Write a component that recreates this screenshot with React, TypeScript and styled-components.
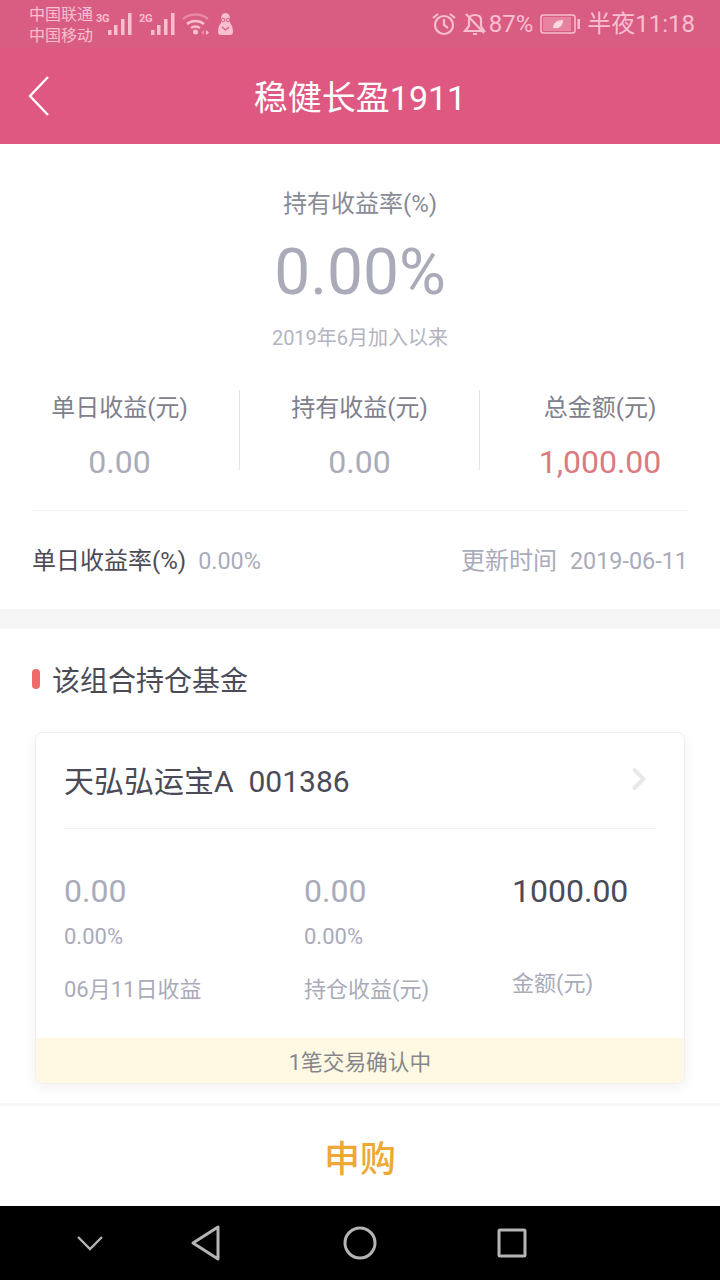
import React from 'react';
import styled, { createGlobalStyle } from 'styled-components';

const GlobalStyle = createGlobalStyle`
  html, body {
    margin: 0;
    padding: 0;
    background: #fff;
    font-family: Roboto, "Noto Sans CJK SC", sans-serif;
  }
`;

const Page = styled.div`
  width: 720px;
  height: 1280px;
  display: flex;
  flex-direction: column;
  overflow: hidden;
`;

const Header = styled.header`
  height: 144px;
  flex: none;
  background: #de5881;
  display: flex;
  flex-direction: column;
`;

const StatusBar = styled.div`
  height: 48px;
  padding: 0 25px 0 29px;
  background: #d95c83;
  display: flex;
  align-items: center;
  color: #f8bfd0;
`;

const Carriers = styled.div`
  font-size: 16px;
  line-height: 21px;
  width: 62px;
  padding-top: 1px;
  flex: none;
  white-space: nowrap;
`;

const StatusLeft = styled.div`
  display: flex;
  align-items: center;
  gap: 5px;
`;

const StatusRight = styled.div`
  margin-left: auto;
  display: flex;
  align-items: center;
`;

const StatusSlot = styled.span<{ $after?: number }>`
  display: flex;
  align-items: center;
  margin-right: ${p => p.$after ?? 0}px;
`;

const StatusText = styled.span`
  font-size: 24px;
  line-height: 48px;
`;

const TitleBar = styled.div`
  height: 96px;
  position: relative;
  display: flex;
  align-items: center;
  justify-content: center;
  padding-bottom: 2px;
  box-sizing: border-box;
`;

const Title = styled.h1`
  margin: 0;
  font-size: 34px;
  font-weight: 400;
  color: #fff;
`;

const BackIcon = styled.svg`
  position: absolute;
  left: 27px;
  top: 27px;
`;

const Summary = styled.section`
  height: 465px;
  flex: none;
  padding: 0 32px;
  box-sizing: border-box;
  text-align: center;
`;

const RateLabel = styled.div`
  padding-top: 43px;
  font-size: 24px;
  line-height: 34px;
  color: #888a96;
`;

const RateValue = styled.div`
  margin-top: 12px;
  font-size: 64px;
  line-height: 80px;
  color: #a9abb9;
`;

const RateNote = styled.div`
  margin-top: 10px;
  font-size: 20px;
  line-height: 30px;
  color: #b2b4bf;
`;

const Stats = styled.div`
  margin-top: 37px;
  display: grid;
  grid-template-columns: 208px 240px 1fr;
  height: 120px;
  border-bottom: 1px solid #f3f3f5;
`;

const Stat = styled.div<{ $divided?: boolean; $shift?: number }>`
  height: 80px;
  box-sizing: border-box;
  display: flex;
  flex-direction: column;
  align-items: center;
  border-right: ${p => (p.$divided ? '1px solid #e3e3e8' : 'none')};
  padding-left: ${p => Math.max(p.$shift ?? 0, 0)}px;
  padding-right: ${p => Math.max(-(p.$shift ?? 0), 0)}px;
`;

const StatLabel = styled.div`
  font-size: 24px;
  line-height: 36px;
  color: #7e808c;
`;

const StatValue = styled.div<{ $accent?: boolean }>`
  margin-top: 17px;
  font-size: 32px;
  line-height: 38px;
  color: ${p => (p.$accent ? '#db7b7f' : '#a9abb9')};
`;

const MetaRow = styled.div`
  display: flex;
  align-items: baseline;
  height: 98px;
  font-size: 24px;
  line-height: 100px;
  color: #a9abb9;
`;

const MetaKey = styled.span`
  color: #4a4b57;
  margin-right: 12px;
`;

const MetaValue = styled.span`
  font-size: 23.4px;
`;

const MetaTime = styled.span`
  margin-left: auto;
`;

const MetaDate = styled(MetaValue)`
  margin-left: 13px;
`;

const Divider = styled.div`
  height: 20px;
  flex: none;
  background: #f5f5f5;
`;

const Holdings = styled.section`
  flex: 1;
  min-height: 0;
  padding: 0 35px;
`;

const SectionHead = styled.div`
  height: 103px;
  padding-bottom: 4px;
  box-sizing: border-box;
  display: flex;
  align-items: center;
  gap: 12px;
  margin-left: -3px;
  font-size: 28px;
  color: #4a4b57;
`;

const Marker = styled.span`
  width: 8px;
  height: 20px;
  border-radius: 4px;
  background: #f06a6a;
`;

const Card = styled.div`
  width: 650px;
  height: 352px;
  box-sizing: border-box;
  border: 1px solid #eeeeee;
  border-radius: 8px;
  box-shadow: 0 4px 14px rgba(0, 0, 0, 0.06);
  overflow: hidden;
  display: flex;
  flex-direction: column;
`;

const CardHead = styled.div`
  margin: 0 28px;
  height: 96px;
  padding-bottom: 3px;
  box-sizing: border-box;
  flex: none;
  display: flex;
  align-items: center;
  justify-content: space-between;
  border-bottom: 1px solid #f3f3f5;
  font-size: 30px;
  color: #4a4b57;
`;

const ChevronIcon = styled.svg`
  margin-right: 10px;
`;

const CardGrid = styled.div`
  flex: 1;
  padding: 0 28px;
  display: grid;
  grid-template-columns: 240px 208px 1fr;
`;

const Col = styled.div`
  padding-top: 42px;
`;

const ColValue = styled.div<{ $dark?: boolean }>`
  font-size: 32px;
  line-height: 40px;
  color: ${p => (p.$dark ? '#4a4b57' : '#a9abb9')};
`;

const ColRate = styled.div`
  margin-top: 11px;
  font-size: 22px;
  line-height: 30px;
  color: #a9abb9;
`;

const ColCaption = styled.div<{ $top: number }>`
  margin-top: ${p => p.$top}px;
  font-size: 22px;
  line-height: 30px;
  color: #a9abb9;
`;

const Notice = styled.div`
  height: 45px;
  flex: none;
  background: #fff9e3;
  text-align: center;
  font-size: 21.7px;
  line-height: 49px;
  color: #85868d;
`;

const Footer = styled.div`
  height: 103px;
  flex: none;
  box-sizing: border-box;
  border-top: 3px solid #f7f7f7;
  display: flex;
  align-items: center;
  justify-content: center;
  font-size: 36px;
  font-weight: 500;
  color: #eda835;
`;

const NavBar = styled.nav`
  height: 74px;
  flex: none;
  background: #000;
  display: grid;
  grid-template-columns: 180px 51px 258px 46px;
  align-items: center;
  justify-items: center;
`;

const Signal = ({ tag }: { tag: string }) => (
  <svg width="38" height="24" viewBox="0 0 38 24">
    <text x="0" y="10" fontSize="11" fontWeight="700" letterSpacing="-0.4" fill="#f8bfd0" fontFamily="Roboto, sans-serif">
      {tag}
    </text>
    <g fill="#f8bfd0">
      <rect x="12" y="18" width="3.5" height="5" />
      <rect x="18" y="13" width="3.5" height="10" />
      <rect x="25" y="7" width="3.5" height="16" />
      <rect x="32" y="1" width="3.5" height="22" />
    </g>
  </svg>
);

const Wifi = () => (
  <svg width="31" height="24" viewBox="0 0 31 24" fill="none" stroke="#f8bfd0" strokeWidth="2.400">
    <path d="M1 7c7-6 18-6 25 0" opacity=".45" />
    <path d="M5 12c5-4 12-4 17 0" />
    <path d="M9 16c3-2 6-2 9 0" />
    <circle cx="13.500" cy="20" r="2.500" fill="#f8bfd0" stroke="none" />
    <path d="M22 18l-3 2.500 3 2.500z" fill="#f8bfd0" stroke="none" opacity=".5" />
    <path d="M24 18l3 2.500-3 2.500z" fill="#f8bfd0" stroke="none" />
  </svg>
);

const Doll = () => (
  <svg width="15" height="24" viewBox="0 0 15 24">
    <path d="M7.500 1c3 0 4.500 2 4.500 6v4c2 2 3 5 3 9 0 2-1 3-3 3H3c-2 0-3-1-3-3 0-4 1-7 3-9V7c0-4 1.500-6 4.500-6z" fill="#f8bfd0" />
    <circle cx="5" cy="8" r="1.800" fill="none" stroke="#d95c83" strokeWidth="1" />
    <circle cx="10" cy="8" r="1.800" fill="none" stroke="#d95c83" strokeWidth="1" />
    <path d="M4 15l3.500 3 3.500-3" stroke="#d95c83" strokeWidth="1.200" fill="none" />
  </svg>
);

const Alarm = () => (
  <svg width="24" height="24" viewBox="0 0 24 24" fill="none" stroke="#f8bfd0" strokeWidth="2.200">
    <circle cx="12" cy="13" r="9" />
    <path d="M12 7v6l4 3M1 6l5-4M23 6l-5-4" />
  </svg>
);

const BellOff = () => (
  <svg width="24" height="24" viewBox="0 0 24 24" fill="none" stroke="#f8bfd0" strokeWidth="2.200">
    <path d="M6 8c0-3 2-5 6-5s6 2 6 5v6l3 5H2l4-5zM10 22h4M3 2l18 19" />
  </svg>
);

const Battery = () => (
  <svg width="40" height="22" viewBox="0 0 40 22">
    <rect x="1" y="2" width="34" height="18" rx="2.500" fill="none" stroke="#f8bfd0" strokeWidth="1.500" />
    <rect x="3" y="4" width="28" height="14" fill="#f8bfd0" opacity=".4" />
    <rect x="37.500" y="6" width="2.500" height="10" fill="#f8bfd0" />
    <path d="M13 15c0-5 4-8 10-8 0 6-4 9-8 8z" fill="#fbd7e2" />
  </svg>
);

const App: React.FC = () => (
  <Page>
    <GlobalStyle />
    <Header>
      <StatusBar>
        <StatusLeft>
          <Carriers>
            中国联通
            <br />
            中国移动
          </Carriers>
          <Signal tag="3G" />
          <Signal tag="2G" />
          <Wifi />
          <Doll />
        </StatusLeft>
        <StatusRight>
          <StatusSlot $after={7}>
            <Alarm />
          </StatusSlot>
          <StatusSlot $after={2}>
            <BellOff />
          </StatusSlot>
          <StatusSlot $after={7}>
            <StatusText>87%</StatusText>
          </StatusSlot>
          <StatusSlot $after={7}>
            <Battery />
          </StatusSlot>
          <StatusText>半夜11:18</StatusText>
        </StatusRight>
      </StatusBar>
      <TitleBar>
        <BackIcon width="24" height="42" viewBox="0 0 24 42" fill="none" stroke="#fff" strokeWidth="2.400">
          <path d="M21 2L3 21l18 19" />
        </BackIcon>
        <Title>稳健长盈1911</Title>
      </TitleBar>
    </Header>

    <Summary>
      <RateLabel>持有收益率(%)</RateLabel>
      <RateValue>0.00%</RateValue>
      <RateNote>2019年6月加入以来</RateNote>
      <Stats>
        <Stat $divided $shift={-32}>
          <StatLabel>单日收益(元)</StatLabel>
          <StatValue>0.00</StatValue>
        </Stat>
        <Stat $divided>
          <StatLabel>持有收益(元)</StatLabel>
          <StatValue>0.00</StatValue>
        </Stat>
        <Stat $shift={32}>
          <StatLabel>总金额(元)</StatLabel>
          <StatValue $accent>1,000.00</StatValue>
        </Stat>
      </Stats>
      <MetaRow>
        <MetaKey>单日收益率(%)</MetaKey>
        <MetaValue>0.00%</MetaValue>
        <MetaTime>更新时间</MetaTime>
        <MetaDate>2019-06-11</MetaDate>
      </MetaRow>
    </Summary>

    <Divider />

    <Holdings>
      <SectionHead>
        <Marker />
        该组合持仓基金
      </SectionHead>
      <Card>
        <CardHead>
          <span>天弘弘运宝A&nbsp;&nbsp;001386</span>
          <ChevronIcon width="14" height="24" viewBox="0 0 14 24" fill="none" stroke="#e8e8ea" strokeWidth="4" strokeLinecap="round" strokeLinejoin="round">
            <path d="M2.500 3l9 9-9 9" />
          </ChevronIcon>
        </CardHead>
        <CardGrid>
          <Col>
            <ColValue>0.00</ColValue>
            <ColRate>0.00%</ColRate>
            <ColCaption $top={23}>06月11日收益</ColCaption>
          </Col>
          <Col>
            <ColValue>0.00</ColValue>
            <ColRate>0.00%</ColRate>
            <ColCaption $top={23}>持仓收益(元)</ColCaption>
          </Col>
          <Col>
            <ColValue $dark>1000.00</ColValue>
            <ColCaption $top={58}>金额(元)</ColCaption>
          </Col>
        </CardGrid>
        <Notice>1笔交易确认中</Notice>
      </Card>
    </Holdings>

    <Footer>申购</Footer>

    <NavBar>
      <svg width="28" height="16" viewBox="0 0 28 16" fill="none" stroke="#b5b5b5" strokeWidth="2.400">
        <path d="M2 2l12 12L26 2" />
      </svg>
      <svg width="30" height="36" viewBox="0 0 30 36" fill="none" stroke="#b5b5b5" strokeWidth="3" strokeLinejoin="round">
        <path d="M27 2v32L2 18z" />
      </svg>
      <svg width="34" height="34" viewBox="0 0 34 34" fill="none" stroke="#b5b5b5" strokeWidth="3">
        <circle cx="17" cy="17" r="15" />
      </svg>
      <svg width="30" height="30" viewBox="0 0 30 30" fill="none" stroke="#b5b5b5" strokeWidth="3" strokeLinejoin="round">
        <rect x="2" y="2" width="26" height="26" rx="1" />
      </svg>
    </NavBar>
  </Page>
);

export default App;
